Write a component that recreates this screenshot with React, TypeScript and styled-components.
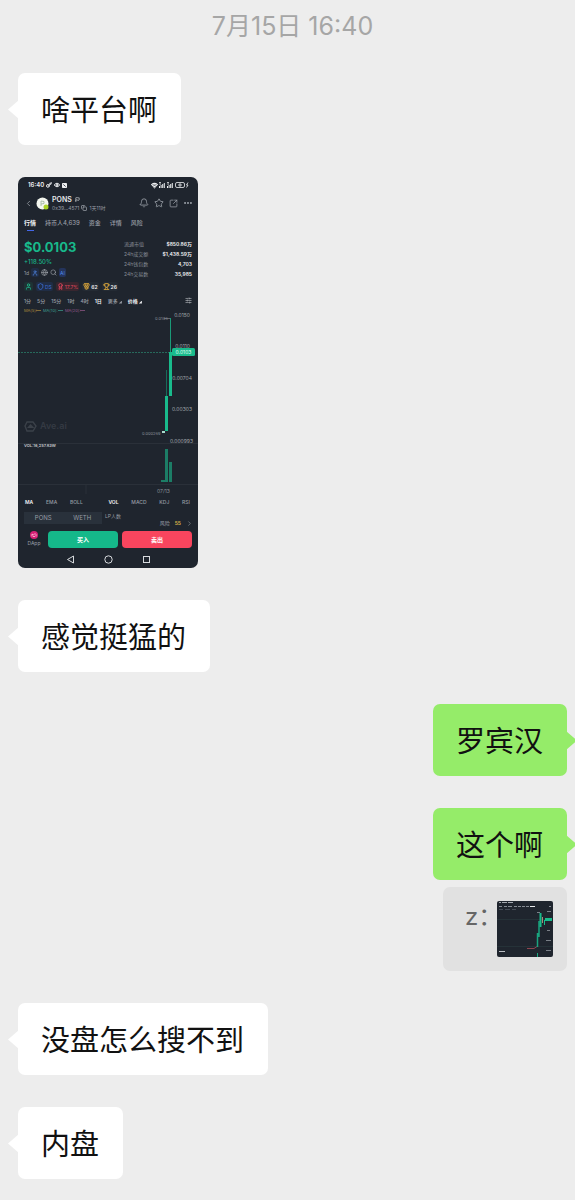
import React from 'react';
import styled, { createGlobalStyle } from 'styled-components';
import {
  Award,
  Bell,
  ChevronLeft,
  ChevronRight,
  Copy,
  Eye,
  Flag,
  Globe,
  Key,
  Medal,
  MoreHorizontal,
  Search,
  SlidersHorizontal,
  SquareArrowOutUpRight,
  Star,
  Trophy,
  User,
  Wifi,
  Shield,
} from 'lucide-react';

const sans = `Inter, "Noto Sans CJK SC", "Liberation Sans", sans-serif`;

const GlobalStyle = createGlobalStyle`
  *, *::before, *::after { box-sizing: border-box; }
  body {
    margin: 0;
    background: #ededed;
    font-family: ${sans};
    overflow-x: hidden;
  }
  button { font: inherit; border: 0; padding: 0; margin: 0; background: none; color: inherit; cursor: pointer; }
  svg { display: block; flex: none; }
`;

/* ---------- conversation ---------- */

const Chat = styled.main`
  display: flex;
  flex-direction: column;
  gap: 32px;
  min-height: 100vh;
  padding: 11px 8px 20px 18px;
  background: #ededed;
`;

const Timestamp = styled.time`
  align-self: center;
  font-size: 25px;
  line-height: 30px;
  color: #a6a6a6;
`;

const Message = styled.article<{ $mine?: boolean }>`
  display: flex;
  flex-direction: column;
  align-items: ${(p) => (p.$mine ? 'flex-end' : 'flex-start')};
  gap: 7px;
`;

const Bubble = styled.p<{ $mine?: boolean }>`
  position: relative;
  margin: 0;
  padding: 13px 24px 15px 23px;
  border-radius: 7px;
  background: ${(p) => (p.$mine ? '#95ec69' : '#ffffff')};
  color: #111;
  font-family: "Noto Sans CJK SC", sans-serif;
  font-size: 29px;
  line-height: 44px;

  &::after {
    content: '';
    position: absolute;
    top: 27px;
    ${(p) => (p.$mine ? 'right: -10px' : 'left: -10px')};
    width: 11px;
    height: 19px;
    background: inherit;
    clip-path: ${(p) =>
      p.$mine
        ? 'polygon(0 0, 100% 50%, 0 100%)'
        : 'polygon(100% 0, 0 50%, 100% 100%)'};
  }
`;

const Quote = styled.blockquote`
  display: flex;
  align-items: flex-start;
  margin: 0;
  padding: 14px 14px 14px 22px;
  border-radius: 7px;
  background: #e1e1e1;
  color: #666;
  font-size: 24px;
  line-height: 32px;
`;

const QuoteAuthor = styled.span`
  width: 32px;
  white-space: nowrap;
`;

const QuoteThumb = styled.svg`
  width: 56px;
  height: 56px;
  border-radius: 2px;
`;

/* ---------- shared trading screenshot ---------- */

const Phone = styled.section`
  display: flex;
  flex-direction: column;
  width: 180px;
  border-radius: 7px;
  overflow: hidden;
  background: #1f252e;
  color: #979ca4;
  font-size: 5px;
  line-height: 8px;
  white-space: nowrap;
`;

const Row = styled.div<{ $gap?: number }>`
  display: flex;
  align-items: center;
  gap: ${(p) => p.$gap ?? 2}px;
`;

const StatusBar = styled.div`
  display: flex;
  align-items: center;
  justify-content: space-between;
  height: 16px;
  padding: 0 9px 0 10px;
  color: #eef0f2;
  font-size: 6px;
  font-weight: 600;
`;

const TokenHeader = styled.header`
  display: flex;
  align-items: center;
  gap: 3px;
  height: 22px;
  padding: 0 5px 2px 6px;
`;

const TokenInfo = styled.div`
  flex: 1;
`;

const TokenName = styled.h2`
  display: flex;
  align-items: center;
  gap: 3px;
  margin: 0;
  color: #e6e8ea;
  font-size: 7px;
  font-weight: 600;
  line-height: 9px;
`;

const IconButton = styled.button`
  display: block;
  color: #9ca2aa;
`;

const SectionTabs = styled.nav`
  display: flex;
  gap: 9px;
  height: 20px;
  padding: 3px 6px 0;
  font-size: 6px;
`;

const SectionTab = styled.button<{ $active?: boolean }>`
  display: flex;
  flex-direction: column;
  align-items: center;
  gap: 2px;
  height: 14px;
  line-height: 10px;
  color: ${(p) => (p.$active ? '#f2f3f5' : '#979ca4')};
  font-weight: ${(p) => (p.$active ? 700 : 500)};

  &::after {
    content: '';
    width: 7px;
    height: 1px;
    background: ${(p) => (p.$active ? '#4467e8' : 'transparent')};
  }
`;

const Overview = styled.div`
  display: flex;
  justify-content: space-between;
  padding: 3px 6px 0;
  height: 43px;
`;

const Price = styled.strong`
  display: block;
  color: #18b98b;
  font-size: 13px;
  font-weight: 700;
  line-height: 18px;
`;

const Change = styled.span`
  display: block;
  color: #18b98b;
  font-size: 6px;
  font-weight: 500;
  line-height: 12px;
`;

const Stats = styled.dl`
  display: grid;
  grid-template-columns: 30px 38px;
  grid-auto-rows: 10px;
  align-items: center;
  margin: 1px 0 0;

  dt { color: #868c95; }
  dd { margin: 0; text-align: right; color: #f0f1f3; font-weight: 600; }
`;

const Badges = styled.div`
  display: flex;
  align-items: center;
  gap: 3px;
  height: 17px;
  padding: 0 6px;
`;

const Badge = styled.span<{ $tone: string; $fill?: string }>`
  display: flex;
  align-items: center;
  gap: 1px;
  height: 9px;
  padding: 0 1px;
  border-radius: 2px;
  background: ${(p) => p.$fill ?? '#242b34'};
  color: ${(p) => p.$tone};

  b { color: #f0f1f3; font-weight: 600; }
`;

const Timeframes = styled.nav`
  display: flex;
  align-items: center;
  gap: 6px;
  height: 11px;
  padding: 0 6px;

  > svg { margin-left: auto; color: #c3c7cc; }
`;

const Choice = styled.button<{ $active?: boolean }>`
  color: ${(p) => (p.$active ? '#f0f1f3' : '#979ca4')};
  font-weight: ${(p) => (p.$active ? 600 : 500)};
`;

const MenuChoice = styled(Choice)`
  display: flex;
  align-items: center;
  gap: 1px;

  &::after {
    content: '';
    width: 3px;
    height: 3px;
    margin-top: 3px;
    background: currentColor;
    clip-path: polygon(100% 0, 100% 100%, 0 100%);
  }
`;

const Chart = styled.svg`
  width: 100%;
  height: 190px;
  font-size: 5px;
`;

const Indicators = styled.nav`
  display: flex;
  align-items: center;
  justify-content: space-between;
  height: 12px;
  padding: 0 8px 0 7px;
`;

const PoolRow = styled.div`
  display: flex;
  gap: 3px;
  height: 23px;
  padding: 4px 5px 0 6px;
`;

const Pair = styled.div`
  display: flex;
  justify-content: space-around;
  width: 78px;
  height: 12px;
  background: #29313b;
  font-size: 6px;
  line-height: 12px;
`;

const Risk = styled.div`
  display: flex;
  align-items: center;
  gap: 5px;
  height: 12px;
  margin: 5px 0 0 auto;

  b { color: #d9b34a; font-weight: 600; }
`;

const TradeBar = styled.div`
  display: flex;
  gap: 4px;
  height: 17px;
  padding: 0 6px;
`;

const DApp = styled.button`
  display: flex;
  flex-direction: column;
  align-items: center;
  width: 20px;
  line-height: 9px;
`;

const TradeButton = styled.button<{ $side: 'buy' | 'sell' }>`
  flex: 1;
  height: 17px;
  border-radius: 4px;
  background: ${(p) => (p.$side === 'buy' ? '#15b88a' : '#f9455e')};
  color: #fff;
  font-size: 6px;
  font-weight: 600;
`;

const SystemNav = styled.footer`
  display: flex;
  align-items: center;
  justify-content: center;
  gap: 29px;
  height: 20px;
  padding-top: 3px;
  color: #d7dadd;
`;

const stats = [
  ['流通市值', '$850.86万'],
  ['24h成交额', '$1,438.59万'],
  ['24h钱包数', '4,703'],
  ['24h交易数', '35,985'],
];

const Signal = () => (
  <svg width="7" height="6" viewBox="0 0 7 6" fill="currentColor">
    <path d="M0 4h1v2H0zM1.600 3h1v3h-1zM3.200 2h1v4h-1zM4.800 1h1v5h-1z" />
    <path d="M0 .2h2v.7H0zM.7.2h.7V3H.7z" />
  </svg>
);

const PriceChart = () => (
  <Chart viewBox="0 0 180 190" role="img" aria-label="PONS K线图">
    <g fontSize="4">
      <text x="6" y="6" fill="#a98a3c">MA(5):</text>
      <path d="M18 4.500h5" stroke="#a98a3c" strokeWidth=".7" />
      <text x="25" y="6" fill="#3c9d8e">MA(10):</text>
      <path d="M40 4.500h5" stroke="#3c9d8e" strokeWidth=".7" />
      <text x="47" y="6" fill="#965a8c">MA(20):</text>
      <path d="M62 4.500h5" stroke="#965a8c" strokeWidth=".7" />
    </g>
    <path d="M0 137.500h180M0 178.500h180M68 178v10" stroke="#2a3039" strokeWidth="1" />
    <path d="M7 120l2-4h6l3 4-3 5H9z" stroke="#3b4149" strokeWidth="1.400" fill="none" />
    <path d="M9 122l3.500-4 4 4z" fill="#3b4149" />
    <text x="22" y="123" fontSize="9" fontWeight="600" fill="#343a43">Ave.ai</text>
    <path d="M0 46.500h154" stroke="#27695b" strokeWidth="1" strokeDasharray="2 1" />
    <path d="M146 12.500h6" stroke="#8b919a" strokeWidth=".6" />
    <path d="M152.500 12v76" stroke="#1a9a78" strokeWidth="1" />
    <rect x="151" y="46" width="3" height="44" fill="#19bb8c" />
    <path d="M148.500 64v26" stroke="#176c59" strokeWidth="1" />
    <rect x="147" y="90" width="3" height="35" fill="#19bb8c" />
    <rect x="144" y="125" width="3" height="2" fill="#a9dbcc" />
    <g fill="#8b919a" fontSize="4">
      <text x="137" y="14">0.0146</text>
      <text x="124" y="129">0.000269</text>
    </g>
    <g fill="#a0a5ac" textAnchor="end">
      <text x="172" y="11">0.0150</text>
      <text x="172" y="42">0.0110</text>
      <text x="174" y="74">0.00704</text>
      <text x="174" y="105">0.00303</text>
      <text x="175" y="137">0.000993</text>
    </g>
    <rect x="154" y="42" width="23" height="8" rx="1.500" fill="#19bb8c" />
    <text x="165.500" y="48" textAnchor="middle" fill="#e2fff6">0.0103</text>
    <text x="6" y="141" fontSize="4" fontWeight="600" fill="#c3c7cc">VOL:16,257.83W</text>
    <rect x="143" y="174" width="4" height="2" fill="#1c7d66" />
    <rect x="147" y="143" width="3" height="33" fill="#1c7d66" />
    <rect x="151" y="156" width="3" height="20" fill="#1c7d66" />
    <text x="139" y="187" fill="#8b919a">07/13</text>
  </Chart>
);

const TradingScreenshot = () => (
  <Phone aria-label="PONS 行情">
    <StatusBar>
      <Row $gap={2}>
        <span>16:40</span>
        <Key size={6} strokeWidth={4} />
        <Eye size={6} strokeWidth={4} />
        <svg width="5" height="5" viewBox="0 0 5 5">
          <rect width="5" height="5" rx=".8" fill="#eef0f2" />
          <path d="M1.300 1.400l2.400 2.200" stroke="#1f252e" strokeWidth=".8" />
        </svg>
      </Row>
      <Row $gap={1}>
        <Wifi size={7} strokeWidth={4} />
        <Signal />
        <Signal />
        <svg width="14" height="6" viewBox="0 0 14 6" fill="none" stroke="currentColor" strokeWidth=".8">
          <rect x=".5" y=".5" width="9" height="5" rx="1.500" />
          <path d="M4 2h2v2H4zM13 .5l-1.500 2.500h1.500L11.500 5.500" />
        </svg>
      </Row>
    </StatusBar>

    <TokenHeader>
      <IconButton aria-label="返回"><ChevronLeft size={9} strokeWidth={2} /></IconButton>
      <svg width="13" height="13" viewBox="0 0 13 13">
        <circle cx="6.500" cy="6.500" r="6" fill="#f3f6ee" />
        <path d="M5 9V4l3 .5v2L5 7" fill="none" stroke="#9ab29a" strokeWidth=".8" />
        <circle cx="10" cy="10" r="2.500" fill="#a9d326" />
      </svg>
      <TokenInfo>
        <TokenName>PONS <Flag size={5} strokeWidth={3} /></TokenName>
        <Row $gap={2}>
          <span>0x39...4571</span>
          <Copy size={6} strokeWidth={3} />
          <span>1天11时</span>
        </Row>
      </TokenInfo>
      <Row $gap={5}>
        <IconButton aria-label="提醒"><Bell size={10} strokeWidth={2} /></IconButton>
        <IconButton aria-label="收藏"><Star size={10} strokeWidth={2} /></IconButton>
        <IconButton aria-label="分享"><SquareArrowOutUpRight size={9} strokeWidth={2} /></IconButton>
        <IconButton aria-label="更多"><MoreHorizontal size={10} strokeWidth={3} /></IconButton>
      </Row>
    </TokenHeader>

    <SectionTabs>
      <SectionTab $active>行情</SectionTab>
      <SectionTab>持币人4,639</SectionTab>
      <SectionTab>资金</SectionTab>
      <SectionTab>详情</SectionTab>
      <SectionTab>风险</SectionTab>
    </SectionTabs>

    <Overview>
      <div>
        <Price>$0.0103</Price>
        <Change>+118.50%</Change>
        <Row $gap={2}>
          <span>1d</span>
          <Badge $tone="#4c7fd6" $fill="#202d45"><User size={6} strokeWidth={3} /></Badge>
          <Globe size={7} color="#a5abb2" />
          <Search size={7} color="#a5abb2" />
          <Badge $tone="#4d8bea" $fill="#24345c">AI</Badge>
        </Row>
      </div>
      <Stats>
        {stats.map(([label, value]) => (
          <React.Fragment key={label}>
            <dt>{label}</dt>
            <dd>{value}</dd>
          </React.Fragment>
        ))}
      </Stats>
    </Overview>

    <Badges>
      <Badge $tone="#20b98c" $fill="#1e3335"><User size={7} strokeWidth={3} /></Badge>
      <Badge $tone="#3d6fd8" $fill="#202d45"><Shield size={7} strokeWidth={3} />DS</Badge>
      <Badge $tone="#e0465c" $fill="#38262f"><Award size={7} strokeWidth={3} />17.7%</Badge>
      <Badge $tone="#d9a63c"><Medal size={7} strokeWidth={3} /><b>62</b></Badge>
      <Badge $tone="#d9a63c"><Trophy size={7} strokeWidth={3} /><b>26</b></Badge>
    </Badges>

    <Timeframes>
      <Choice>1分</Choice>
      <Choice>5分</Choice>
      <Choice>15分</Choice>
      <Choice>1时</Choice>
      <Choice>4时</Choice>
      <Choice $active>1日</Choice>
      <MenuChoice>更多</MenuChoice>
      <MenuChoice $active>价格</MenuChoice>
      <SlidersHorizontal size={7} strokeWidth={2} />
    </Timeframes>

    <PriceChart />

    <Indicators>
      <Choice $active>MA</Choice>
      <Choice>EMA</Choice>
      <Choice>BOLL</Choice>
      <span />
      <Choice $active>VOL</Choice>
      <Choice>MACD</Choice>
      <Choice>KDJ</Choice>
      <Choice>RSI</Choice>
    </Indicators>

    <PoolRow>
      <Pair><span>PONS</span><span>WETH</span></Pair>
      <span>LP人数</span>
      <Risk>风险 <b>55</b><ChevronRight size={7} /></Risk>
    </PoolRow>

    <TradeBar>
      <DApp>
        <svg width="8" height="8" viewBox="0 0 8 8">
          <circle cx="4" cy="4" r="4" fill="#d61f75" />
          <path d="M2 5.500V3l1.500 1L5 2.500l1 1v2M3 5.500h2" fill="none" stroke="#ffd8ea" strokeWidth=".7" />
        </svg>
        DApp
      </DApp>
      <TradeButton $side="buy">买入</TradeButton>
      <TradeButton $side="sell">卖出</TradeButton>
    </TradeBar>

    <SystemNav>
      <svg width="9" height="9" viewBox="0 0 9 9" fill="none" stroke="currentColor">
        <path d="M7.500 1v7L1.500 4.500z" />
      </svg>
      <svg width="9" height="9" viewBox="0 0 9 9" fill="none" stroke="currentColor">
        <circle cx="4.500" cy="4.500" r="3.700" />
      </svg>
      <svg width="9" height="9" viewBox="0 0 9 9" fill="none" stroke="currentColor">
        <rect x="1.500" y="1.500" width="6" height="6" />
      </svg>
    </SystemNav>
  </Phone>
);

const ChartThumbnail = () => (
  <QuoteThumb viewBox="0 0 56 56" role="img" aria-label="K线图">
    <rect width="56" height="56" fill="#1f252e" />
    <path d="M2 1.500h2M5 1.500h5M11 1.500h5" stroke="#a4a9b0" strokeWidth="1" />
    <path d="M2 5.500h3M7 5.500h3M11 5.500h4M17 5.500h3M21 5.500h3M25 5.500h3M29 5.500h3M52 5.500h2" stroke="#858b93" strokeWidth="1" />
    <path d="M33 5.500h5" stroke="#e5e7ea" strokeWidth="1" />
    <path d="M2 8.500h4M8 8.500h5M15 8.500h4" stroke="#565d67" strokeWidth=".7" />
    <path d="M0 18.500h48M0 45.500h56" stroke="#2a3a40" strokeWidth=".6" />
    <path d="M30 47.500h7l3-2" stroke="#8e4650" strokeWidth="1" fill="none" />
    <path d="M40.500 46V32M42 36V20" stroke="#19a57f" strokeWidth="1.500" />
    <path d="M43.500 26V12" stroke="#19bb8c" strokeWidth="2" />
    <path d="M45.500 16v6" stroke="#a98a7c" strokeWidth="1" />
    <path d="M47.500 24v-5" stroke="#19bb8c" strokeWidth="1" />
    <rect x="48" y="17" width="7" height="3" fill="#19bb8c" />
    <path d="M40 11.500h3M50 10.500h4M50 29.500h3M49 39.500h5M49 49.500h5" stroke="#858b93" strokeWidth=".9" />
    <path d="M2 50.500h6" stroke="#b9bdc2" strokeWidth="1" />
    <path d="M40.500 52v4" stroke="#19a57f" strokeWidth="1" />
  </QuoteThumb>
);

export default function App() {
  return (
    <>
      <GlobalStyle />
      <Chat lang="zh-CN">
        <Timestamp dateTime="07-15T16:40">7月15日 16:40</Timestamp>
        <Message><Bubble>啥平台啊</Bubble></Message>
        <Message><TradingScreenshot /></Message>
        <Message><Bubble>感觉挺猛的</Bubble></Message>
        <Message $mine><Bubble $mine>罗宾汉</Bubble></Message>
        <Message $mine>
          <Bubble $mine>这个啊</Bubble>
          <Quote>
            <QuoteAuthor>z：</QuoteAuthor>
            <ChartThumbnail />
          </Quote>
        </Message>
        <Message><Bubble>没盘怎么搜不到</Bubble></Message>
        <Message><Bubble>内盘</Bubble></Message>
      </Chat>
    </>
  );
}
